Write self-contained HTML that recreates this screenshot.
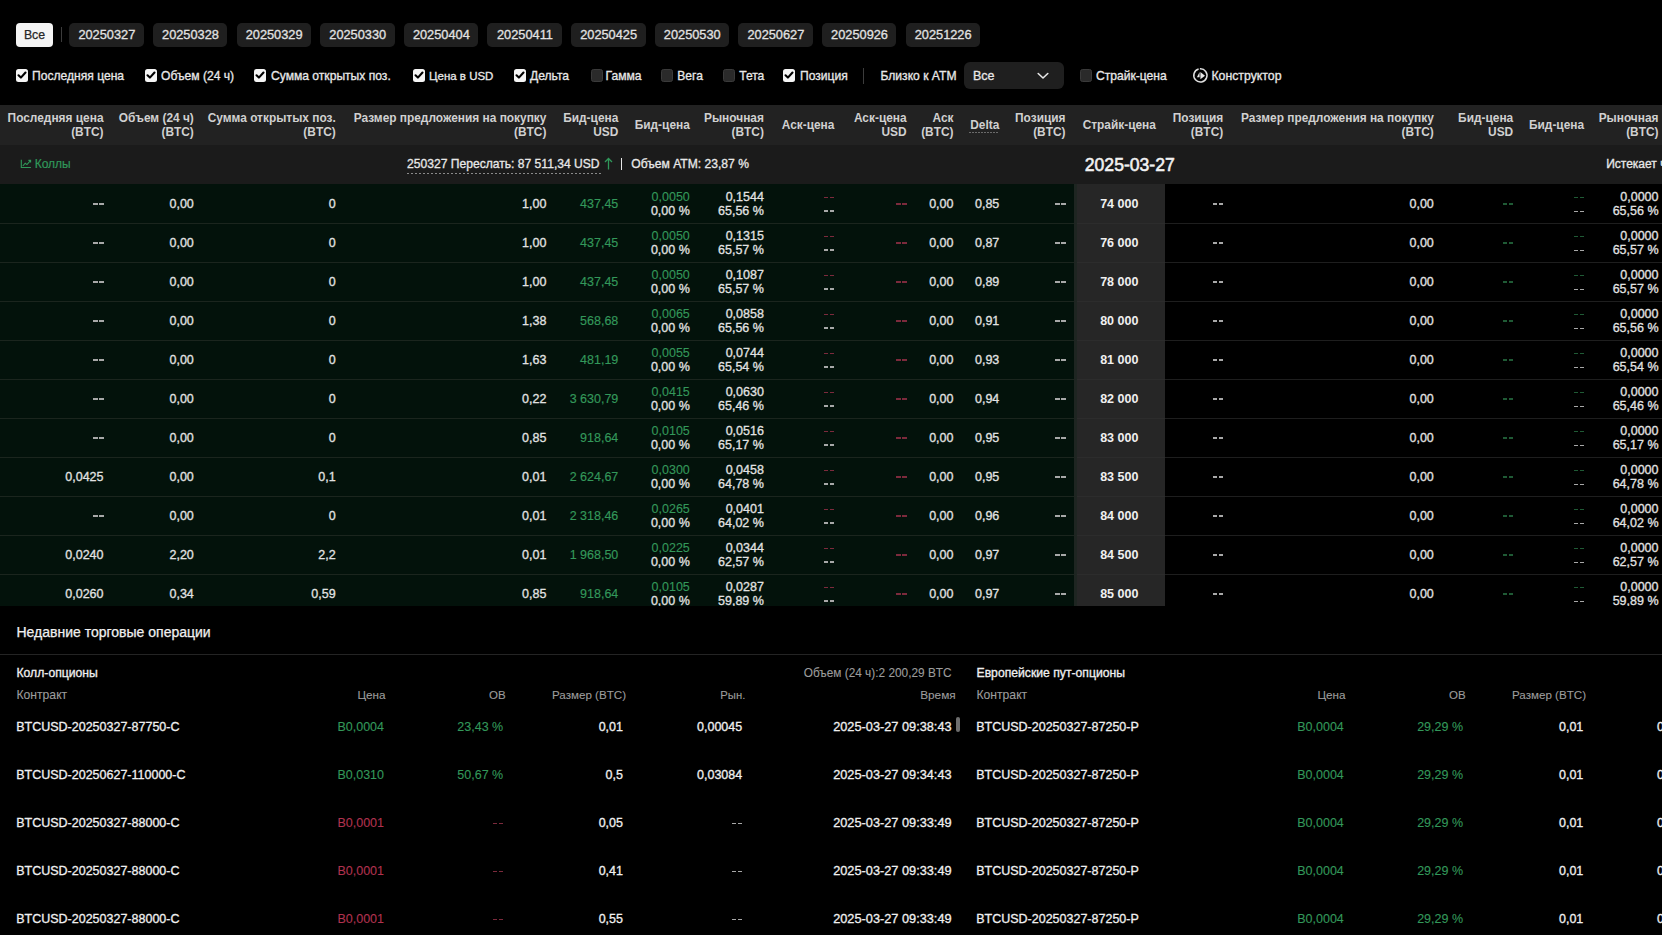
<!DOCTYPE html>
<html><head><meta charset="utf-8"><title>Options</title><style>
html,body{margin:0;padding:0;}
body{width:1662px;height:935px;background:#000;overflow:hidden;position:relative;font-family:"Liberation Sans", sans-serif;}
.t{position:absolute;white-space:nowrap;}
.b{position:absolute;}
</style></head><body>
<div class="b" style="left:16px;top:23px;width:37px;height:23.5px;background:#f4f4f4;border-radius:4px;"></div>
<div class="t" style="top:26.80px;font-size:12.3px;line-height:16px;color:#262626;-webkit-text-stroke:0.25px #262626;left:-315.50px;width:700px;text-align:center;">Все</div>
<div class="b" style="left:61px;top:27px;width:1px;height:15px;background:#3c3c3c;"></div>
<div class="b" style="left:69.3px;top:23px;width:74.5px;height:23.5px;background:#1f1f1f;border-radius:5px;"></div>
<div class="t" style="top:26.80px;font-size:12.8px;line-height:16px;color:#e2e2e2;-webkit-text-stroke:0.3px #e2e2e2;left:-243.15px;width:700px;text-align:center;">20250327</div>
<div class="b" style="left:152.93px;top:23px;width:74.5px;height:23.5px;background:#1f1f1f;border-radius:5px;"></div>
<div class="t" style="top:26.80px;font-size:12.8px;line-height:16px;color:#e2e2e2;-webkit-text-stroke:0.3px #e2e2e2;left:-159.52px;width:700px;text-align:center;">20250328</div>
<div class="b" style="left:236.56px;top:23px;width:74.5px;height:23.5px;background:#1f1f1f;border-radius:5px;"></div>
<div class="t" style="top:26.80px;font-size:12.8px;line-height:16px;color:#e2e2e2;-webkit-text-stroke:0.3px #e2e2e2;left:-75.89px;width:700px;text-align:center;">20250329</div>
<div class="b" style="left:320.19px;top:23px;width:74.5px;height:23.5px;background:#1f1f1f;border-radius:5px;"></div>
<div class="t" style="top:26.80px;font-size:12.8px;line-height:16px;color:#e2e2e2;-webkit-text-stroke:0.3px #e2e2e2;left:7.74px;width:700px;text-align:center;">20250330</div>
<div class="b" style="left:403.82px;top:23px;width:74.5px;height:23.5px;background:#1f1f1f;border-radius:5px;"></div>
<div class="t" style="top:26.80px;font-size:12.8px;line-height:16px;color:#e2e2e2;-webkit-text-stroke:0.3px #e2e2e2;left:91.37px;width:700px;text-align:center;">20250404</div>
<div class="b" style="left:487.45px;top:23px;width:74.5px;height:23.5px;background:#1f1f1f;border-radius:5px;"></div>
<div class="t" style="top:26.80px;font-size:12.8px;line-height:16px;color:#e2e2e2;-webkit-text-stroke:0.3px #e2e2e2;left:175.00px;width:700px;text-align:center;">20250411</div>
<div class="b" style="left:571.08px;top:23px;width:74.5px;height:23.5px;background:#1f1f1f;border-radius:5px;"></div>
<div class="t" style="top:26.80px;font-size:12.8px;line-height:16px;color:#e2e2e2;-webkit-text-stroke:0.3px #e2e2e2;left:258.63px;width:700px;text-align:center;">20250425</div>
<div class="b" style="left:654.71px;top:23px;width:74.5px;height:23.5px;background:#1f1f1f;border-radius:5px;"></div>
<div class="t" style="top:26.80px;font-size:12.8px;line-height:16px;color:#e2e2e2;-webkit-text-stroke:0.3px #e2e2e2;left:342.26px;width:700px;text-align:center;">20250530</div>
<div class="b" style="left:738.34px;top:23px;width:74.5px;height:23.5px;background:#1f1f1f;border-radius:5px;"></div>
<div class="t" style="top:26.80px;font-size:12.8px;line-height:16px;color:#e2e2e2;-webkit-text-stroke:0.3px #e2e2e2;left:425.89px;width:700px;text-align:center;">20250627</div>
<div class="b" style="left:821.97px;top:23px;width:74.5px;height:23.5px;background:#1f1f1f;border-radius:5px;"></div>
<div class="t" style="top:26.80px;font-size:12.8px;line-height:16px;color:#e2e2e2;-webkit-text-stroke:0.3px #e2e2e2;left:509.52px;width:700px;text-align:center;">20250926</div>
<div class="b" style="left:905.6px;top:23px;width:74.5px;height:23.5px;background:#1f1f1f;border-radius:5px;"></div>
<div class="t" style="top:26.80px;font-size:12.8px;line-height:16px;color:#e2e2e2;-webkit-text-stroke:0.3px #e2e2e2;left:593.15px;width:700px;text-align:center;">20251226</div>
<div class="b" style="left:16px;top:69px;width:12px;height:12.5px;background:#f5f5f5;border-radius:2.5px;"><svg width="12" height="12" viewBox="0 0 12 12" style="position:absolute;left:0;top:0"><path d="M2.5 6.3 L4.9 8.6 L9.5 3.5" fill="none" stroke="#000" stroke-width="2.1" stroke-linecap="round" stroke-linejoin="round"/></svg></div>
<div class="t" style="top:67.50px;font-size:12.1px;line-height:16px;color:#e8e8e8;-webkit-text-stroke:0.3px #e8e8e8;left:32.00px;">Последняя цена</div>
<div class="b" style="left:145px;top:69px;width:12px;height:12.5px;background:#f5f5f5;border-radius:2.5px;"><svg width="12" height="12" viewBox="0 0 12 12" style="position:absolute;left:0;top:0"><path d="M2.5 6.3 L4.9 8.6 L9.5 3.5" fill="none" stroke="#000" stroke-width="2.1" stroke-linecap="round" stroke-linejoin="round"/></svg></div>
<div class="t" style="top:67.50px;font-size:12.1px;line-height:16px;color:#e8e8e8;-webkit-text-stroke:0.3px #e8e8e8;left:161.00px;">Объем (24 ч)</div>
<div class="b" style="left:254px;top:69px;width:12px;height:12.5px;background:#f5f5f5;border-radius:2.5px;"><svg width="12" height="12" viewBox="0 0 12 12" style="position:absolute;left:0;top:0"><path d="M2.5 6.3 L4.9 8.6 L9.5 3.5" fill="none" stroke="#000" stroke-width="2.1" stroke-linecap="round" stroke-linejoin="round"/></svg></div>
<div class="t" style="top:67.50px;font-size:12.1px;line-height:16px;color:#e8e8e8;-webkit-text-stroke:0.3px #e8e8e8;left:271.00px;">Сумма открытых поз.</div>
<div class="b" style="left:413px;top:69px;width:12px;height:12.5px;background:#f5f5f5;border-radius:2.5px;"><svg width="12" height="12" viewBox="0 0 12 12" style="position:absolute;left:0;top:0"><path d="M2.5 6.3 L4.9 8.6 L9.5 3.5" fill="none" stroke="#000" stroke-width="2.1" stroke-linecap="round" stroke-linejoin="round"/></svg></div>
<div class="t" style="top:67.50px;font-size:11.5px;line-height:16px;color:#e8e8e8;-webkit-text-stroke:0.3px #e8e8e8;left:429.00px;">Цена в USD</div>
<div class="b" style="left:514px;top:69px;width:12px;height:12.5px;background:#f5f5f5;border-radius:2.5px;"><svg width="12" height="12" viewBox="0 0 12 12" style="position:absolute;left:0;top:0"><path d="M2.5 6.3 L4.9 8.6 L9.5 3.5" fill="none" stroke="#000" stroke-width="2.1" stroke-linecap="round" stroke-linejoin="round"/></svg></div>
<div class="t" style="top:67.50px;font-size:12.1px;line-height:16px;color:#e8e8e8;-webkit-text-stroke:0.3px #e8e8e8;left:530.00px;">Дельта</div>
<div class="b" style="left:590.5px;top:69px;width:12px;height:12.5px;background:#2a2a2a;border-radius:2.5px;box-sizing:border-box;border:1px solid #3a3a3a;"></div>
<div class="t" style="top:67.50px;font-size:12.1px;line-height:16px;color:#e8e8e8;-webkit-text-stroke:0.3px #e8e8e8;left:605.60px;">Гамма</div>
<div class="b" style="left:661.3px;top:69px;width:12px;height:12.5px;background:#2a2a2a;border-radius:2.5px;box-sizing:border-box;border:1px solid #3a3a3a;"></div>
<div class="t" style="top:67.50px;font-size:12.1px;line-height:16px;color:#e8e8e8;-webkit-text-stroke:0.3px #e8e8e8;left:677.30px;">Вега</div>
<div class="b" style="left:723.3px;top:69px;width:12px;height:12.5px;background:#2a2a2a;border-radius:2.5px;box-sizing:border-box;border:1px solid #3a3a3a;"></div>
<div class="t" style="top:67.50px;font-size:12.1px;line-height:16px;color:#e8e8e8;-webkit-text-stroke:0.3px #e8e8e8;left:739.20px;">Тета</div>
<div class="b" style="left:783px;top:69px;width:12px;height:12.5px;background:#f5f5f5;border-radius:2.5px;"><svg width="12" height="12" viewBox="0 0 12 12" style="position:absolute;left:0;top:0"><path d="M2.5 6.3 L4.9 8.6 L9.5 3.5" fill="none" stroke="#000" stroke-width="2.1" stroke-linecap="round" stroke-linejoin="round"/></svg></div>
<div class="t" style="top:67.50px;font-size:12.1px;line-height:16px;color:#e8e8e8;-webkit-text-stroke:0.3px #e8e8e8;left:800.00px;">Позиция</div>
<div class="b" style="left:863px;top:68px;width:1px;height:16px;background:#3c3c3c;"></div>
<div class="t" style="top:67.50px;font-size:12.1px;line-height:16px;color:#e8e8e8;-webkit-text-stroke:0.3px #e8e8e8;left:880.50px;">Близко к ATM</div>
<div class="b" style="left:964px;top:62px;width:100px;height:27px;background:#1f1f1f;border-radius:6px;"></div>
<div class="t" style="top:67.80px;font-size:12.5px;line-height:16px;color:#e8e8e8;-webkit-text-stroke:0.3px #e8e8e8;left:973.00px;">Все</div>
<svg class="b" style="left:1037px;top:72px" width="12" height="8" viewBox="0 0 12 8"><path d="M1.2 1.5 L6 6 L10.8 1.5" fill="none" stroke="#e8e8e8" stroke-width="1.6" stroke-linecap="round" stroke-linejoin="round"/></svg>
<div class="b" style="left:1080px;top:69px;width:12px;height:12.5px;background:#2a2a2a;border-radius:2.5px;box-sizing:border-box;border:1px solid #3a3a3a;"></div>
<div class="t" style="top:67.50px;font-size:12.1px;line-height:16px;color:#e8e8e8;-webkit-text-stroke:0.3px #e8e8e8;left:1096.00px;">Страйк-цена</div>
<svg class="b" style="left:1192px;top:67px" width="17" height="17" viewBox="0 0 17 17"><path d="M6.6 2.05 A6.6 6.6 0 1 0 7.9 1.82" fill="none" stroke="#e0e0e0" stroke-width="1.5"/><path d="M8.4 5 L13 8.8 L8.4 12.3 Z M7.6 4.9 L4.9 10.3 L7.6 10.3 Z" fill="#e8e8e8"/></svg>
<div class="t" style="top:67.50px;font-size:12.3px;line-height:16px;color:#e8e8e8;-webkit-text-stroke:0.3px #e8e8e8;left:1211.40px;">Конструктор</div>
<div class="b" style="left:0px;top:105px;width:1662px;height:40px;background:#222222;"></div>
<div class="b" style="left:0px;top:145px;width:1662px;height:39px;background:#1b1b1b;"></div>
<div class="t" style="top:109.50px;font-size:11.9px;line-height:16px;color:#d0d0d0;font-weight:700;left:-596.50px;width:700px;text-align:right;">Последняя цена</div>
<div class="t" style="top:123.50px;font-size:11.9px;line-height:16px;color:#d0d0d0;font-weight:700;left:-596.50px;width:700px;text-align:right;">(BTC)</div>
<div class="t" style="top:109.50px;font-size:11.9px;line-height:16px;color:#d0d0d0;font-weight:700;left:-506.20px;width:700px;text-align:right;">Объем (24 ч)</div>
<div class="t" style="top:123.50px;font-size:11.9px;line-height:16px;color:#d0d0d0;font-weight:700;left:-506.20px;width:700px;text-align:right;">(BTC)</div>
<div class="t" style="top:109.50px;font-size:11.9px;line-height:16px;color:#d0d0d0;font-weight:700;left:-364.30px;width:700px;text-align:right;">Сумма открытых поз.</div>
<div class="t" style="top:123.50px;font-size:11.9px;line-height:16px;color:#d0d0d0;font-weight:700;left:-364.30px;width:700px;text-align:right;">(BTC)</div>
<div class="t" style="top:109.50px;font-size:11.9px;line-height:16px;color:#d0d0d0;font-weight:700;left:-153.60px;width:700px;text-align:right;">Размер предложения на покупку</div>
<div class="t" style="top:123.50px;font-size:11.9px;line-height:16px;color:#d0d0d0;font-weight:700;left:-153.60px;width:700px;text-align:right;">(BTC)</div>
<div class="t" style="top:109.50px;font-size:11.9px;line-height:16px;color:#d0d0d0;font-weight:700;left:-81.70px;width:700px;text-align:right;">Бид-цена</div>
<div class="t" style="top:123.50px;font-size:11.9px;line-height:16px;color:#d0d0d0;font-weight:700;left:-81.70px;width:700px;text-align:right;">USD</div>
<div class="t" style="top:116.50px;font-size:11.9px;line-height:16px;color:#d0d0d0;font-weight:700;left:-10.20px;width:700px;text-align:right;">Бид-цена</div>
<div class="t" style="top:109.50px;font-size:11.9px;line-height:16px;color:#d0d0d0;font-weight:700;left:63.90px;width:700px;text-align:right;">Рыночная</div>
<div class="t" style="top:123.50px;font-size:11.9px;line-height:16px;color:#d0d0d0;font-weight:700;left:63.90px;width:700px;text-align:right;">(BTC)</div>
<div class="t" style="top:116.50px;font-size:11.9px;line-height:16px;color:#d0d0d0;font-weight:700;left:134.40px;width:700px;text-align:right;">Аск-цена</div>
<div class="t" style="top:109.50px;font-size:11.9px;line-height:16px;color:#d0d0d0;font-weight:700;left:206.60px;width:700px;text-align:right;">Аск-цена</div>
<div class="t" style="top:123.50px;font-size:11.9px;line-height:16px;color:#d0d0d0;font-weight:700;left:206.60px;width:700px;text-align:right;">USD</div>
<div class="t" style="top:109.50px;font-size:11.9px;line-height:16px;color:#d0d0d0;font-weight:700;left:253.50px;width:700px;text-align:right;">Аск</div>
<div class="t" style="top:123.50px;font-size:11.9px;line-height:16px;color:#d0d0d0;font-weight:700;left:253.50px;width:700px;text-align:right;">(BTC)</div>
<div class="t" style="top:116.50px;font-size:11.9px;line-height:16px;color:#d0d0d0;font-weight:700;left:299.30px;width:700px;text-align:right;">Delta</div>
<div class="b" style="left:969px;top:131.5px;width:30px;height:1px;background:repeating-linear-gradient(90deg,#6a6a6a 0 2px,transparent 2px 3px);"></div>
<div class="t" style="top:109.50px;font-size:11.9px;line-height:16px;color:#d0d0d0;font-weight:700;left:365.50px;width:700px;text-align:right;">Позиция</div>
<div class="t" style="top:123.50px;font-size:11.9px;line-height:16px;color:#d0d0d0;font-weight:700;left:365.50px;width:700px;text-align:right;">(BTC)</div>
<div class="t" style="top:116.50px;font-size:11.9px;line-height:16px;color:#d0d0d0;font-weight:700;left:769.30px;width:700px;text-align:center;">Страйк-цена</div>
<div class="t" style="top:109.50px;font-size:11.9px;line-height:16px;color:#d0d0d0;font-weight:700;left:523.20px;width:700px;text-align:right;">Позиция</div>
<div class="t" style="top:123.50px;font-size:11.9px;line-height:16px;color:#d0d0d0;font-weight:700;left:523.20px;width:700px;text-align:right;">(BTC)</div>
<div class="t" style="top:109.50px;font-size:11.9px;line-height:16px;color:#d0d0d0;font-weight:700;left:733.80px;width:700px;text-align:right;">Размер предложения на покупку</div>
<div class="t" style="top:123.50px;font-size:11.9px;line-height:16px;color:#d0d0d0;font-weight:700;left:733.80px;width:700px;text-align:right;">(BTC)</div>
<div class="t" style="top:109.50px;font-size:11.9px;line-height:16px;color:#d0d0d0;font-weight:700;left:813.20px;width:700px;text-align:right;">Бид-цена</div>
<div class="t" style="top:123.50px;font-size:11.9px;line-height:16px;color:#d0d0d0;font-weight:700;left:813.20px;width:700px;text-align:right;">USD</div>
<div class="t" style="top:116.50px;font-size:11.9px;line-height:16px;color:#d0d0d0;font-weight:700;left:884.10px;width:700px;text-align:right;">Бид-цена</div>
<div class="t" style="top:109.50px;font-size:11.9px;line-height:16px;color:#d0d0d0;font-weight:700;left:958.50px;width:700px;text-align:right;">Рыночная</div>
<div class="t" style="top:123.50px;font-size:11.9px;line-height:16px;color:#d0d0d0;font-weight:700;left:958.50px;width:700px;text-align:right;">(BTC)</div>
<svg class="b" style="left:20px;top:159px" width="12" height="10" viewBox="0 0 12 10"><path d="M1.3 0.8 V8.5 H10.9" fill="none" stroke="#30985a" stroke-width="1.1"/><path d="M2.8 7 L5.2 4.2 L7 5.6 L10.4 1.6 M8.4 1.4 H10.6 V3.6" fill="none" stroke="#30985a" stroke-width="1.1"/></svg>
<div class="t" style="top:156.00px;font-size:12px;line-height:16px;color:#30985a;-webkit-text-stroke:0.2px #30985a;left:34.70px;">Коллы</div>
<div class="t" style="top:155.50px;font-size:12.1px;line-height:16px;color:#e8e8e8;-webkit-text-stroke:0.3px #e8e8e8;left:407.10px;">250327 Переслать: 87 511,34 USD</div>
<div class="b" style="left:407px;top:172.5px;width:194px;height:1px;background:repeating-linear-gradient(90deg,#8a8a8a 0 2px,transparent 2px 4px);"></div>
<svg class="b" style="left:604px;top:157px" width="9" height="13" viewBox="0 0 9 13"><path d="M4.5 12.5 V1.5 M1 5 L4.5 1.5 L8 5" fill="none" stroke="#30985a" stroke-width="1.3"/></svg>
<div class="b" style="left:621px;top:158px;width:1.3px;height:12px;background:#e8e8e8;"></div>
<div class="t" style="top:155.50px;font-size:12.1px;line-height:16px;color:#e8e8e8;-webkit-text-stroke:0.3px #e8e8e8;left:631.30px;">Объем ATM: 23,87 %</div>
<div class="t" style="top:156.60px;font-size:17.6px;line-height:16px;color:#f2f2f2;-webkit-text-stroke:0.55px #f2f2f2;left:1084.80px;">2025-03-27</div>
<div class="t" style="top:155.50px;font-size:12px;line-height:16px;color:#e8e8e8;-webkit-text-stroke:0.3px #e8e8e8;left:1606.20px;">Истекает через 7 ч</div>
<div class="b" style="left:0;top:184px;width:1662px;height:422px;overflow:hidden">
<div class="b" style="left:0;top:0px;width:1074px;height:39px;background:#03120b;"></div>
<div class="b" style="left:1074px;top:0px;width:91px;height:39px;background:#262626;"></div>
<div class="b" style="left:1074px;top:0px;width:3px;height:39px;background:#1e2521"></div>
<div class="b" style="left:1165px;top:0px;width:497px;height:39px;background:#000;"></div>
<div class="b" style="left:93.0px;top:19.45px;width:10.5px;height:1.1px;background:linear-gradient(90deg,#a8a8a8 0 43%,transparent 43% 57%,#a8a8a8 57% 100%);"></div>
<div class="t" style="top:11.50px;font-size:12.5px;line-height:16px;color:#e2e2e2;-webkit-text-stroke:0.3px #e2e2e2;left:-506.20px;width:700px;text-align:right;">0,00</div>
<div class="t" style="top:11.50px;font-size:12.5px;line-height:16px;color:#e2e2e2;-webkit-text-stroke:0.3px #e2e2e2;left:-364.30px;width:700px;text-align:right;">0</div>
<div class="t" style="top:11.50px;font-size:12.5px;line-height:16px;color:#e2e2e2;-webkit-text-stroke:0.3px #e2e2e2;left:-153.60px;width:700px;text-align:right;">1,00</div>
<div class="t" style="top:11.50px;font-size:12.5px;line-height:16px;color:#33985a;-webkit-text-stroke:0.15px #33985a;left:-81.70px;width:700px;text-align:right;">437,45</div>
<div class="t" style="top:5.20px;font-size:12.5px;line-height:16px;color:#33985a;-webkit-text-stroke:0.1px #33985a;left:-10.20px;width:700px;text-align:right;">0,0050</div>
<div class="t" style="top:18.50px;font-size:12.5px;line-height:16px;color:#e2e2e2;-webkit-text-stroke:0.3px #e2e2e2;left:-10.20px;width:700px;text-align:right;">0,00 %</div>
<div class="t" style="top:5.20px;font-size:12.5px;line-height:16px;color:#e2e2e2;-webkit-text-stroke:0.3px #e2e2e2;left:63.90px;width:700px;text-align:right;">0,1544</div>
<div class="t" style="top:18.50px;font-size:12.5px;line-height:16px;color:#e2e2e2;-webkit-text-stroke:0.3px #e2e2e2;left:63.90px;width:700px;text-align:right;">65,56 %</div>
<div class="b" style="left:823.9px;top:13.15px;width:10.5px;height:1.1px;background:linear-gradient(90deg,#7c2a3c 0 43%,transparent 43% 57%,#7c2a3c 57% 100%);"></div>
<div class="b" style="left:823.9px;top:26.45px;width:10.5px;height:1.1px;background:linear-gradient(90deg,#a8a8a8 0 43%,transparent 43% 57%,#a8a8a8 57% 100%);"></div>
<div class="b" style="left:896.1px;top:19.45px;width:10.5px;height:1.1px;background:linear-gradient(90deg,#7c2a3c 0 43%,transparent 43% 57%,#7c2a3c 57% 100%);"></div>
<div class="t" style="top:11.50px;font-size:12.5px;line-height:16px;color:#e2e2e2;-webkit-text-stroke:0.3px #e2e2e2;left:253.50px;width:700px;text-align:right;">0,00</div>
<div class="t" style="top:11.50px;font-size:12.5px;line-height:16px;color:#e2e2e2;-webkit-text-stroke:0.3px #e2e2e2;left:299.30px;width:700px;text-align:right;">0,85</div>
<div class="b" style="left:1055.0px;top:19.45px;width:10.5px;height:1.1px;background:linear-gradient(90deg,#a8a8a8 0 43%,transparent 43% 57%,#a8a8a8 57% 100%);"></div>
<div class="t" style="top:11.50px;font-size:12.5px;line-height:16px;color:#f0f0f0;font-weight:700;left:769.30px;width:700px;text-align:center;">74 000</div>
<div class="b" style="left:1212.7px;top:19.45px;width:10.5px;height:1.1px;background:linear-gradient(90deg,#a8a8a8 0 43%,transparent 43% 57%,#a8a8a8 57% 100%);"></div>
<div class="t" style="top:11.50px;font-size:12.5px;line-height:16px;color:#e2e2e2;-webkit-text-stroke:0.3px #e2e2e2;left:733.80px;width:700px;text-align:right;">0,00</div>
<div class="b" style="left:1502.7px;top:19.45px;width:10.5px;height:1.1px;background:linear-gradient(90deg,#1f5a35 0 43%,transparent 43% 57%,#1f5a35 57% 100%);"></div>
<div class="b" style="left:1573.6px;top:12.65px;width:10.5px;height:1.1px;background:linear-gradient(90deg,#1f5a35 0 43%,transparent 43% 57%,#1f5a35 57% 100%);"></div>
<div class="b" style="left:1573.6px;top:26.75px;width:10.5px;height:1.1px;background:linear-gradient(90deg,#a8a8a8 0 43%,transparent 43% 57%,#a8a8a8 57% 100%);"></div>
<div class="t" style="top:4.90px;font-size:12.5px;line-height:16px;color:#e2e2e2;-webkit-text-stroke:0.3px #e2e2e2;left:958.50px;width:700px;text-align:right;">0,0000</div>
<div class="t" style="top:19.10px;font-size:12.5px;line-height:16px;color:#e2e2e2;-webkit-text-stroke:0.3px #e2e2e2;left:958.50px;width:700px;text-align:right;">65,56 %</div>
<div class="b" style="left:0;top:39px;width:1074px;height:39px;background:#03120b;border-top:1px solid #1b251e;box-sizing:border-box;"></div>
<div class="b" style="left:1074px;top:39px;width:91px;height:39px;background:#262626;border-top:1px solid #2c2c2c;box-sizing:border-box;"></div>
<div class="b" style="left:1074px;top:39px;width:3px;height:39px;background:#1e2521"></div>
<div class="b" style="left:1165px;top:39px;width:497px;height:39px;background:#000;border-top:1px solid #1e1e1e;box-sizing:border-box;"></div>
<div class="b" style="left:93.0px;top:58.45px;width:10.5px;height:1.1px;background:linear-gradient(90deg,#a8a8a8 0 43%,transparent 43% 57%,#a8a8a8 57% 100%);"></div>
<div class="t" style="top:50.50px;font-size:12.5px;line-height:16px;color:#e2e2e2;-webkit-text-stroke:0.3px #e2e2e2;left:-506.20px;width:700px;text-align:right;">0,00</div>
<div class="t" style="top:50.50px;font-size:12.5px;line-height:16px;color:#e2e2e2;-webkit-text-stroke:0.3px #e2e2e2;left:-364.30px;width:700px;text-align:right;">0</div>
<div class="t" style="top:50.50px;font-size:12.5px;line-height:16px;color:#e2e2e2;-webkit-text-stroke:0.3px #e2e2e2;left:-153.60px;width:700px;text-align:right;">1,00</div>
<div class="t" style="top:50.50px;font-size:12.5px;line-height:16px;color:#33985a;-webkit-text-stroke:0.15px #33985a;left:-81.70px;width:700px;text-align:right;">437,45</div>
<div class="t" style="top:44.20px;font-size:12.5px;line-height:16px;color:#33985a;-webkit-text-stroke:0.1px #33985a;left:-10.20px;width:700px;text-align:right;">0,0050</div>
<div class="t" style="top:57.50px;font-size:12.5px;line-height:16px;color:#e2e2e2;-webkit-text-stroke:0.3px #e2e2e2;left:-10.20px;width:700px;text-align:right;">0,00 %</div>
<div class="t" style="top:44.20px;font-size:12.5px;line-height:16px;color:#e2e2e2;-webkit-text-stroke:0.3px #e2e2e2;left:63.90px;width:700px;text-align:right;">0,1315</div>
<div class="t" style="top:57.50px;font-size:12.5px;line-height:16px;color:#e2e2e2;-webkit-text-stroke:0.3px #e2e2e2;left:63.90px;width:700px;text-align:right;">65,57 %</div>
<div class="b" style="left:823.9px;top:52.15px;width:10.5px;height:1.1px;background:linear-gradient(90deg,#7c2a3c 0 43%,transparent 43% 57%,#7c2a3c 57% 100%);"></div>
<div class="b" style="left:823.9px;top:65.45px;width:10.5px;height:1.1px;background:linear-gradient(90deg,#a8a8a8 0 43%,transparent 43% 57%,#a8a8a8 57% 100%);"></div>
<div class="b" style="left:896.1px;top:58.45px;width:10.5px;height:1.1px;background:linear-gradient(90deg,#7c2a3c 0 43%,transparent 43% 57%,#7c2a3c 57% 100%);"></div>
<div class="t" style="top:50.50px;font-size:12.5px;line-height:16px;color:#e2e2e2;-webkit-text-stroke:0.3px #e2e2e2;left:253.50px;width:700px;text-align:right;">0,00</div>
<div class="t" style="top:50.50px;font-size:12.5px;line-height:16px;color:#e2e2e2;-webkit-text-stroke:0.3px #e2e2e2;left:299.30px;width:700px;text-align:right;">0,87</div>
<div class="b" style="left:1055.0px;top:58.45px;width:10.5px;height:1.1px;background:linear-gradient(90deg,#a8a8a8 0 43%,transparent 43% 57%,#a8a8a8 57% 100%);"></div>
<div class="t" style="top:50.50px;font-size:12.5px;line-height:16px;color:#f0f0f0;font-weight:700;left:769.30px;width:700px;text-align:center;">76 000</div>
<div class="b" style="left:1212.7px;top:58.45px;width:10.5px;height:1.1px;background:linear-gradient(90deg,#a8a8a8 0 43%,transparent 43% 57%,#a8a8a8 57% 100%);"></div>
<div class="t" style="top:50.50px;font-size:12.5px;line-height:16px;color:#e2e2e2;-webkit-text-stroke:0.3px #e2e2e2;left:733.80px;width:700px;text-align:right;">0,00</div>
<div class="b" style="left:1502.7px;top:58.45px;width:10.5px;height:1.1px;background:linear-gradient(90deg,#1f5a35 0 43%,transparent 43% 57%,#1f5a35 57% 100%);"></div>
<div class="b" style="left:1573.6px;top:51.65px;width:10.5px;height:1.1px;background:linear-gradient(90deg,#1f5a35 0 43%,transparent 43% 57%,#1f5a35 57% 100%);"></div>
<div class="b" style="left:1573.6px;top:65.75px;width:10.5px;height:1.1px;background:linear-gradient(90deg,#a8a8a8 0 43%,transparent 43% 57%,#a8a8a8 57% 100%);"></div>
<div class="t" style="top:43.90px;font-size:12.5px;line-height:16px;color:#e2e2e2;-webkit-text-stroke:0.3px #e2e2e2;left:958.50px;width:700px;text-align:right;">0,0000</div>
<div class="t" style="top:58.10px;font-size:12.5px;line-height:16px;color:#e2e2e2;-webkit-text-stroke:0.3px #e2e2e2;left:958.50px;width:700px;text-align:right;">65,57 %</div>
<div class="b" style="left:0;top:78px;width:1074px;height:39px;background:#03120b;border-top:1px solid #1b251e;box-sizing:border-box;"></div>
<div class="b" style="left:1074px;top:78px;width:91px;height:39px;background:#262626;border-top:1px solid #2c2c2c;box-sizing:border-box;"></div>
<div class="b" style="left:1074px;top:78px;width:3px;height:39px;background:#1e2521"></div>
<div class="b" style="left:1165px;top:78px;width:497px;height:39px;background:#000;border-top:1px solid #1e1e1e;box-sizing:border-box;"></div>
<div class="b" style="left:93.0px;top:97.45px;width:10.5px;height:1.1px;background:linear-gradient(90deg,#a8a8a8 0 43%,transparent 43% 57%,#a8a8a8 57% 100%);"></div>
<div class="t" style="top:89.50px;font-size:12.5px;line-height:16px;color:#e2e2e2;-webkit-text-stroke:0.3px #e2e2e2;left:-506.20px;width:700px;text-align:right;">0,00</div>
<div class="t" style="top:89.50px;font-size:12.5px;line-height:16px;color:#e2e2e2;-webkit-text-stroke:0.3px #e2e2e2;left:-364.30px;width:700px;text-align:right;">0</div>
<div class="t" style="top:89.50px;font-size:12.5px;line-height:16px;color:#e2e2e2;-webkit-text-stroke:0.3px #e2e2e2;left:-153.60px;width:700px;text-align:right;">1,00</div>
<div class="t" style="top:89.50px;font-size:12.5px;line-height:16px;color:#33985a;-webkit-text-stroke:0.15px #33985a;left:-81.70px;width:700px;text-align:right;">437,45</div>
<div class="t" style="top:83.20px;font-size:12.5px;line-height:16px;color:#33985a;-webkit-text-stroke:0.1px #33985a;left:-10.20px;width:700px;text-align:right;">0,0050</div>
<div class="t" style="top:96.50px;font-size:12.5px;line-height:16px;color:#e2e2e2;-webkit-text-stroke:0.3px #e2e2e2;left:-10.20px;width:700px;text-align:right;">0,00 %</div>
<div class="t" style="top:83.20px;font-size:12.5px;line-height:16px;color:#e2e2e2;-webkit-text-stroke:0.3px #e2e2e2;left:63.90px;width:700px;text-align:right;">0,1087</div>
<div class="t" style="top:96.50px;font-size:12.5px;line-height:16px;color:#e2e2e2;-webkit-text-stroke:0.3px #e2e2e2;left:63.90px;width:700px;text-align:right;">65,57 %</div>
<div class="b" style="left:823.9px;top:91.15px;width:10.5px;height:1.1px;background:linear-gradient(90deg,#7c2a3c 0 43%,transparent 43% 57%,#7c2a3c 57% 100%);"></div>
<div class="b" style="left:823.9px;top:104.45px;width:10.5px;height:1.1px;background:linear-gradient(90deg,#a8a8a8 0 43%,transparent 43% 57%,#a8a8a8 57% 100%);"></div>
<div class="b" style="left:896.1px;top:97.45px;width:10.5px;height:1.1px;background:linear-gradient(90deg,#7c2a3c 0 43%,transparent 43% 57%,#7c2a3c 57% 100%);"></div>
<div class="t" style="top:89.50px;font-size:12.5px;line-height:16px;color:#e2e2e2;-webkit-text-stroke:0.3px #e2e2e2;left:253.50px;width:700px;text-align:right;">0,00</div>
<div class="t" style="top:89.50px;font-size:12.5px;line-height:16px;color:#e2e2e2;-webkit-text-stroke:0.3px #e2e2e2;left:299.30px;width:700px;text-align:right;">0,89</div>
<div class="b" style="left:1055.0px;top:97.45px;width:10.5px;height:1.1px;background:linear-gradient(90deg,#a8a8a8 0 43%,transparent 43% 57%,#a8a8a8 57% 100%);"></div>
<div class="t" style="top:89.50px;font-size:12.5px;line-height:16px;color:#f0f0f0;font-weight:700;left:769.30px;width:700px;text-align:center;">78 000</div>
<div class="b" style="left:1212.7px;top:97.45px;width:10.5px;height:1.1px;background:linear-gradient(90deg,#a8a8a8 0 43%,transparent 43% 57%,#a8a8a8 57% 100%);"></div>
<div class="t" style="top:89.50px;font-size:12.5px;line-height:16px;color:#e2e2e2;-webkit-text-stroke:0.3px #e2e2e2;left:733.80px;width:700px;text-align:right;">0,00</div>
<div class="b" style="left:1502.7px;top:97.45px;width:10.5px;height:1.1px;background:linear-gradient(90deg,#1f5a35 0 43%,transparent 43% 57%,#1f5a35 57% 100%);"></div>
<div class="b" style="left:1573.6px;top:90.65px;width:10.5px;height:1.1px;background:linear-gradient(90deg,#1f5a35 0 43%,transparent 43% 57%,#1f5a35 57% 100%);"></div>
<div class="b" style="left:1573.6px;top:104.75px;width:10.5px;height:1.1px;background:linear-gradient(90deg,#a8a8a8 0 43%,transparent 43% 57%,#a8a8a8 57% 100%);"></div>
<div class="t" style="top:82.90px;font-size:12.5px;line-height:16px;color:#e2e2e2;-webkit-text-stroke:0.3px #e2e2e2;left:958.50px;width:700px;text-align:right;">0,0000</div>
<div class="t" style="top:97.10px;font-size:12.5px;line-height:16px;color:#e2e2e2;-webkit-text-stroke:0.3px #e2e2e2;left:958.50px;width:700px;text-align:right;">65,57 %</div>
<div class="b" style="left:0;top:117px;width:1074px;height:39px;background:#03120b;border-top:1px solid #1b251e;box-sizing:border-box;"></div>
<div class="b" style="left:1074px;top:117px;width:91px;height:39px;background:#262626;border-top:1px solid #2c2c2c;box-sizing:border-box;"></div>
<div class="b" style="left:1074px;top:117px;width:3px;height:39px;background:#1e2521"></div>
<div class="b" style="left:1165px;top:117px;width:497px;height:39px;background:#000;border-top:1px solid #1e1e1e;box-sizing:border-box;"></div>
<div class="b" style="left:93.0px;top:136.45px;width:10.5px;height:1.1px;background:linear-gradient(90deg,#a8a8a8 0 43%,transparent 43% 57%,#a8a8a8 57% 100%);"></div>
<div class="t" style="top:128.50px;font-size:12.5px;line-height:16px;color:#e2e2e2;-webkit-text-stroke:0.3px #e2e2e2;left:-506.20px;width:700px;text-align:right;">0,00</div>
<div class="t" style="top:128.50px;font-size:12.5px;line-height:16px;color:#e2e2e2;-webkit-text-stroke:0.3px #e2e2e2;left:-364.30px;width:700px;text-align:right;">0</div>
<div class="t" style="top:128.50px;font-size:12.5px;line-height:16px;color:#e2e2e2;-webkit-text-stroke:0.3px #e2e2e2;left:-153.60px;width:700px;text-align:right;">1,38</div>
<div class="t" style="top:128.50px;font-size:12.5px;line-height:16px;color:#33985a;-webkit-text-stroke:0.15px #33985a;left:-81.70px;width:700px;text-align:right;">568,68</div>
<div class="t" style="top:122.20px;font-size:12.5px;line-height:16px;color:#33985a;-webkit-text-stroke:0.1px #33985a;left:-10.20px;width:700px;text-align:right;">0,0065</div>
<div class="t" style="top:135.50px;font-size:12.5px;line-height:16px;color:#e2e2e2;-webkit-text-stroke:0.3px #e2e2e2;left:-10.20px;width:700px;text-align:right;">0,00 %</div>
<div class="t" style="top:122.20px;font-size:12.5px;line-height:16px;color:#e2e2e2;-webkit-text-stroke:0.3px #e2e2e2;left:63.90px;width:700px;text-align:right;">0,0858</div>
<div class="t" style="top:135.50px;font-size:12.5px;line-height:16px;color:#e2e2e2;-webkit-text-stroke:0.3px #e2e2e2;left:63.90px;width:700px;text-align:right;">65,56 %</div>
<div class="b" style="left:823.9px;top:130.15px;width:10.5px;height:1.1px;background:linear-gradient(90deg,#7c2a3c 0 43%,transparent 43% 57%,#7c2a3c 57% 100%);"></div>
<div class="b" style="left:823.9px;top:143.45px;width:10.5px;height:1.1px;background:linear-gradient(90deg,#a8a8a8 0 43%,transparent 43% 57%,#a8a8a8 57% 100%);"></div>
<div class="b" style="left:896.1px;top:136.45px;width:10.5px;height:1.1px;background:linear-gradient(90deg,#7c2a3c 0 43%,transparent 43% 57%,#7c2a3c 57% 100%);"></div>
<div class="t" style="top:128.50px;font-size:12.5px;line-height:16px;color:#e2e2e2;-webkit-text-stroke:0.3px #e2e2e2;left:253.50px;width:700px;text-align:right;">0,00</div>
<div class="t" style="top:128.50px;font-size:12.5px;line-height:16px;color:#e2e2e2;-webkit-text-stroke:0.3px #e2e2e2;left:299.30px;width:700px;text-align:right;">0,91</div>
<div class="b" style="left:1055.0px;top:136.45px;width:10.5px;height:1.1px;background:linear-gradient(90deg,#a8a8a8 0 43%,transparent 43% 57%,#a8a8a8 57% 100%);"></div>
<div class="t" style="top:128.50px;font-size:12.5px;line-height:16px;color:#f0f0f0;font-weight:700;left:769.30px;width:700px;text-align:center;">80 000</div>
<div class="b" style="left:1212.7px;top:136.45px;width:10.5px;height:1.1px;background:linear-gradient(90deg,#a8a8a8 0 43%,transparent 43% 57%,#a8a8a8 57% 100%);"></div>
<div class="t" style="top:128.50px;font-size:12.5px;line-height:16px;color:#e2e2e2;-webkit-text-stroke:0.3px #e2e2e2;left:733.80px;width:700px;text-align:right;">0,00</div>
<div class="b" style="left:1502.7px;top:136.45px;width:10.5px;height:1.1px;background:linear-gradient(90deg,#1f5a35 0 43%,transparent 43% 57%,#1f5a35 57% 100%);"></div>
<div class="b" style="left:1573.6px;top:129.65px;width:10.5px;height:1.1px;background:linear-gradient(90deg,#1f5a35 0 43%,transparent 43% 57%,#1f5a35 57% 100%);"></div>
<div class="b" style="left:1573.6px;top:143.75px;width:10.5px;height:1.1px;background:linear-gradient(90deg,#a8a8a8 0 43%,transparent 43% 57%,#a8a8a8 57% 100%);"></div>
<div class="t" style="top:121.90px;font-size:12.5px;line-height:16px;color:#e2e2e2;-webkit-text-stroke:0.3px #e2e2e2;left:958.50px;width:700px;text-align:right;">0,0000</div>
<div class="t" style="top:136.10px;font-size:12.5px;line-height:16px;color:#e2e2e2;-webkit-text-stroke:0.3px #e2e2e2;left:958.50px;width:700px;text-align:right;">65,56 %</div>
<div class="b" style="left:0;top:156px;width:1074px;height:39px;background:#03120b;border-top:1px solid #1b251e;box-sizing:border-box;"></div>
<div class="b" style="left:1074px;top:156px;width:91px;height:39px;background:#262626;border-top:1px solid #2c2c2c;box-sizing:border-box;"></div>
<div class="b" style="left:1074px;top:156px;width:3px;height:39px;background:#1e2521"></div>
<div class="b" style="left:1165px;top:156px;width:497px;height:39px;background:#000;border-top:1px solid #1e1e1e;box-sizing:border-box;"></div>
<div class="b" style="left:93.0px;top:175.45px;width:10.5px;height:1.1px;background:linear-gradient(90deg,#a8a8a8 0 43%,transparent 43% 57%,#a8a8a8 57% 100%);"></div>
<div class="t" style="top:167.50px;font-size:12.5px;line-height:16px;color:#e2e2e2;-webkit-text-stroke:0.3px #e2e2e2;left:-506.20px;width:700px;text-align:right;">0,00</div>
<div class="t" style="top:167.50px;font-size:12.5px;line-height:16px;color:#e2e2e2;-webkit-text-stroke:0.3px #e2e2e2;left:-364.30px;width:700px;text-align:right;">0</div>
<div class="t" style="top:167.50px;font-size:12.5px;line-height:16px;color:#e2e2e2;-webkit-text-stroke:0.3px #e2e2e2;left:-153.60px;width:700px;text-align:right;">1,63</div>
<div class="t" style="top:167.50px;font-size:12.5px;line-height:16px;color:#33985a;-webkit-text-stroke:0.15px #33985a;left:-81.70px;width:700px;text-align:right;">481,19</div>
<div class="t" style="top:161.20px;font-size:12.5px;line-height:16px;color:#33985a;-webkit-text-stroke:0.1px #33985a;left:-10.20px;width:700px;text-align:right;">0,0055</div>
<div class="t" style="top:174.50px;font-size:12.5px;line-height:16px;color:#e2e2e2;-webkit-text-stroke:0.3px #e2e2e2;left:-10.20px;width:700px;text-align:right;">0,00 %</div>
<div class="t" style="top:161.20px;font-size:12.5px;line-height:16px;color:#e2e2e2;-webkit-text-stroke:0.3px #e2e2e2;left:63.90px;width:700px;text-align:right;">0,0744</div>
<div class="t" style="top:174.50px;font-size:12.5px;line-height:16px;color:#e2e2e2;-webkit-text-stroke:0.3px #e2e2e2;left:63.90px;width:700px;text-align:right;">65,54 %</div>
<div class="b" style="left:823.9px;top:169.15px;width:10.5px;height:1.1px;background:linear-gradient(90deg,#7c2a3c 0 43%,transparent 43% 57%,#7c2a3c 57% 100%);"></div>
<div class="b" style="left:823.9px;top:182.45px;width:10.5px;height:1.1px;background:linear-gradient(90deg,#a8a8a8 0 43%,transparent 43% 57%,#a8a8a8 57% 100%);"></div>
<div class="b" style="left:896.1px;top:175.45px;width:10.5px;height:1.1px;background:linear-gradient(90deg,#7c2a3c 0 43%,transparent 43% 57%,#7c2a3c 57% 100%);"></div>
<div class="t" style="top:167.50px;font-size:12.5px;line-height:16px;color:#e2e2e2;-webkit-text-stroke:0.3px #e2e2e2;left:253.50px;width:700px;text-align:right;">0,00</div>
<div class="t" style="top:167.50px;font-size:12.5px;line-height:16px;color:#e2e2e2;-webkit-text-stroke:0.3px #e2e2e2;left:299.30px;width:700px;text-align:right;">0,93</div>
<div class="b" style="left:1055.0px;top:175.45px;width:10.5px;height:1.1px;background:linear-gradient(90deg,#a8a8a8 0 43%,transparent 43% 57%,#a8a8a8 57% 100%);"></div>
<div class="t" style="top:167.50px;font-size:12.5px;line-height:16px;color:#f0f0f0;font-weight:700;left:769.30px;width:700px;text-align:center;">81 000</div>
<div class="b" style="left:1212.7px;top:175.45px;width:10.5px;height:1.1px;background:linear-gradient(90deg,#a8a8a8 0 43%,transparent 43% 57%,#a8a8a8 57% 100%);"></div>
<div class="t" style="top:167.50px;font-size:12.5px;line-height:16px;color:#e2e2e2;-webkit-text-stroke:0.3px #e2e2e2;left:733.80px;width:700px;text-align:right;">0,00</div>
<div class="b" style="left:1502.7px;top:175.45px;width:10.5px;height:1.1px;background:linear-gradient(90deg,#1f5a35 0 43%,transparent 43% 57%,#1f5a35 57% 100%);"></div>
<div class="b" style="left:1573.6px;top:168.65px;width:10.5px;height:1.1px;background:linear-gradient(90deg,#1f5a35 0 43%,transparent 43% 57%,#1f5a35 57% 100%);"></div>
<div class="b" style="left:1573.6px;top:182.75px;width:10.5px;height:1.1px;background:linear-gradient(90deg,#a8a8a8 0 43%,transparent 43% 57%,#a8a8a8 57% 100%);"></div>
<div class="t" style="top:160.90px;font-size:12.5px;line-height:16px;color:#e2e2e2;-webkit-text-stroke:0.3px #e2e2e2;left:958.50px;width:700px;text-align:right;">0,0000</div>
<div class="t" style="top:175.10px;font-size:12.5px;line-height:16px;color:#e2e2e2;-webkit-text-stroke:0.3px #e2e2e2;left:958.50px;width:700px;text-align:right;">65,54 %</div>
<div class="b" style="left:0;top:195px;width:1074px;height:39px;background:#03120b;border-top:1px solid #1b251e;box-sizing:border-box;"></div>
<div class="b" style="left:1074px;top:195px;width:91px;height:39px;background:#262626;border-top:1px solid #2c2c2c;box-sizing:border-box;"></div>
<div class="b" style="left:1074px;top:195px;width:3px;height:39px;background:#1e2521"></div>
<div class="b" style="left:1165px;top:195px;width:497px;height:39px;background:#000;border-top:1px solid #1e1e1e;box-sizing:border-box;"></div>
<div class="b" style="left:93.0px;top:214.45px;width:10.5px;height:1.1px;background:linear-gradient(90deg,#a8a8a8 0 43%,transparent 43% 57%,#a8a8a8 57% 100%);"></div>
<div class="t" style="top:206.50px;font-size:12.5px;line-height:16px;color:#e2e2e2;-webkit-text-stroke:0.3px #e2e2e2;left:-506.20px;width:700px;text-align:right;">0,00</div>
<div class="t" style="top:206.50px;font-size:12.5px;line-height:16px;color:#e2e2e2;-webkit-text-stroke:0.3px #e2e2e2;left:-364.30px;width:700px;text-align:right;">0</div>
<div class="t" style="top:206.50px;font-size:12.5px;line-height:16px;color:#e2e2e2;-webkit-text-stroke:0.3px #e2e2e2;left:-153.60px;width:700px;text-align:right;">0,22</div>
<div class="t" style="top:206.50px;font-size:12.5px;line-height:16px;color:#33985a;-webkit-text-stroke:0.15px #33985a;left:-81.70px;width:700px;text-align:right;">3 630,79</div>
<div class="t" style="top:200.20px;font-size:12.5px;line-height:16px;color:#33985a;-webkit-text-stroke:0.1px #33985a;left:-10.20px;width:700px;text-align:right;">0,0415</div>
<div class="t" style="top:213.50px;font-size:12.5px;line-height:16px;color:#e2e2e2;-webkit-text-stroke:0.3px #e2e2e2;left:-10.20px;width:700px;text-align:right;">0,00 %</div>
<div class="t" style="top:200.20px;font-size:12.5px;line-height:16px;color:#e2e2e2;-webkit-text-stroke:0.3px #e2e2e2;left:63.90px;width:700px;text-align:right;">0,0630</div>
<div class="t" style="top:213.50px;font-size:12.5px;line-height:16px;color:#e2e2e2;-webkit-text-stroke:0.3px #e2e2e2;left:63.90px;width:700px;text-align:right;">65,46 %</div>
<div class="b" style="left:823.9px;top:208.15px;width:10.5px;height:1.1px;background:linear-gradient(90deg,#7c2a3c 0 43%,transparent 43% 57%,#7c2a3c 57% 100%);"></div>
<div class="b" style="left:823.9px;top:221.45px;width:10.5px;height:1.1px;background:linear-gradient(90deg,#a8a8a8 0 43%,transparent 43% 57%,#a8a8a8 57% 100%);"></div>
<div class="b" style="left:896.1px;top:214.45px;width:10.5px;height:1.1px;background:linear-gradient(90deg,#7c2a3c 0 43%,transparent 43% 57%,#7c2a3c 57% 100%);"></div>
<div class="t" style="top:206.50px;font-size:12.5px;line-height:16px;color:#e2e2e2;-webkit-text-stroke:0.3px #e2e2e2;left:253.50px;width:700px;text-align:right;">0,00</div>
<div class="t" style="top:206.50px;font-size:12.5px;line-height:16px;color:#e2e2e2;-webkit-text-stroke:0.3px #e2e2e2;left:299.30px;width:700px;text-align:right;">0,94</div>
<div class="b" style="left:1055.0px;top:214.45px;width:10.5px;height:1.1px;background:linear-gradient(90deg,#a8a8a8 0 43%,transparent 43% 57%,#a8a8a8 57% 100%);"></div>
<div class="t" style="top:206.50px;font-size:12.5px;line-height:16px;color:#f0f0f0;font-weight:700;left:769.30px;width:700px;text-align:center;">82 000</div>
<div class="b" style="left:1212.7px;top:214.45px;width:10.5px;height:1.1px;background:linear-gradient(90deg,#a8a8a8 0 43%,transparent 43% 57%,#a8a8a8 57% 100%);"></div>
<div class="t" style="top:206.50px;font-size:12.5px;line-height:16px;color:#e2e2e2;-webkit-text-stroke:0.3px #e2e2e2;left:733.80px;width:700px;text-align:right;">0,00</div>
<div class="b" style="left:1502.7px;top:214.45px;width:10.5px;height:1.1px;background:linear-gradient(90deg,#1f5a35 0 43%,transparent 43% 57%,#1f5a35 57% 100%);"></div>
<div class="b" style="left:1573.6px;top:207.65px;width:10.5px;height:1.1px;background:linear-gradient(90deg,#1f5a35 0 43%,transparent 43% 57%,#1f5a35 57% 100%);"></div>
<div class="b" style="left:1573.6px;top:221.75px;width:10.5px;height:1.1px;background:linear-gradient(90deg,#a8a8a8 0 43%,transparent 43% 57%,#a8a8a8 57% 100%);"></div>
<div class="t" style="top:199.90px;font-size:12.5px;line-height:16px;color:#e2e2e2;-webkit-text-stroke:0.3px #e2e2e2;left:958.50px;width:700px;text-align:right;">0,0000</div>
<div class="t" style="top:214.10px;font-size:12.5px;line-height:16px;color:#e2e2e2;-webkit-text-stroke:0.3px #e2e2e2;left:958.50px;width:700px;text-align:right;">65,46 %</div>
<div class="b" style="left:0;top:234px;width:1074px;height:39px;background:#03120b;border-top:1px solid #1b251e;box-sizing:border-box;"></div>
<div class="b" style="left:1074px;top:234px;width:91px;height:39px;background:#262626;border-top:1px solid #2c2c2c;box-sizing:border-box;"></div>
<div class="b" style="left:1074px;top:234px;width:3px;height:39px;background:#1e2521"></div>
<div class="b" style="left:1165px;top:234px;width:497px;height:39px;background:#000;border-top:1px solid #1e1e1e;box-sizing:border-box;"></div>
<div class="b" style="left:93.0px;top:253.45px;width:10.5px;height:1.1px;background:linear-gradient(90deg,#a8a8a8 0 43%,transparent 43% 57%,#a8a8a8 57% 100%);"></div>
<div class="t" style="top:245.50px;font-size:12.5px;line-height:16px;color:#e2e2e2;-webkit-text-stroke:0.3px #e2e2e2;left:-506.20px;width:700px;text-align:right;">0,00</div>
<div class="t" style="top:245.50px;font-size:12.5px;line-height:16px;color:#e2e2e2;-webkit-text-stroke:0.3px #e2e2e2;left:-364.30px;width:700px;text-align:right;">0</div>
<div class="t" style="top:245.50px;font-size:12.5px;line-height:16px;color:#e2e2e2;-webkit-text-stroke:0.3px #e2e2e2;left:-153.60px;width:700px;text-align:right;">0,85</div>
<div class="t" style="top:245.50px;font-size:12.5px;line-height:16px;color:#33985a;-webkit-text-stroke:0.15px #33985a;left:-81.70px;width:700px;text-align:right;">918,64</div>
<div class="t" style="top:239.20px;font-size:12.5px;line-height:16px;color:#33985a;-webkit-text-stroke:0.1px #33985a;left:-10.20px;width:700px;text-align:right;">0,0105</div>
<div class="t" style="top:252.50px;font-size:12.5px;line-height:16px;color:#e2e2e2;-webkit-text-stroke:0.3px #e2e2e2;left:-10.20px;width:700px;text-align:right;">0,00 %</div>
<div class="t" style="top:239.20px;font-size:12.5px;line-height:16px;color:#e2e2e2;-webkit-text-stroke:0.3px #e2e2e2;left:63.90px;width:700px;text-align:right;">0,0516</div>
<div class="t" style="top:252.50px;font-size:12.5px;line-height:16px;color:#e2e2e2;-webkit-text-stroke:0.3px #e2e2e2;left:63.90px;width:700px;text-align:right;">65,17 %</div>
<div class="b" style="left:823.9px;top:247.15px;width:10.5px;height:1.1px;background:linear-gradient(90deg,#7c2a3c 0 43%,transparent 43% 57%,#7c2a3c 57% 100%);"></div>
<div class="b" style="left:823.9px;top:260.45px;width:10.5px;height:1.1px;background:linear-gradient(90deg,#a8a8a8 0 43%,transparent 43% 57%,#a8a8a8 57% 100%);"></div>
<div class="b" style="left:896.1px;top:253.45px;width:10.5px;height:1.1px;background:linear-gradient(90deg,#7c2a3c 0 43%,transparent 43% 57%,#7c2a3c 57% 100%);"></div>
<div class="t" style="top:245.50px;font-size:12.5px;line-height:16px;color:#e2e2e2;-webkit-text-stroke:0.3px #e2e2e2;left:253.50px;width:700px;text-align:right;">0,00</div>
<div class="t" style="top:245.50px;font-size:12.5px;line-height:16px;color:#e2e2e2;-webkit-text-stroke:0.3px #e2e2e2;left:299.30px;width:700px;text-align:right;">0,95</div>
<div class="b" style="left:1055.0px;top:253.45px;width:10.5px;height:1.1px;background:linear-gradient(90deg,#a8a8a8 0 43%,transparent 43% 57%,#a8a8a8 57% 100%);"></div>
<div class="t" style="top:245.50px;font-size:12.5px;line-height:16px;color:#f0f0f0;font-weight:700;left:769.30px;width:700px;text-align:center;">83 000</div>
<div class="b" style="left:1212.7px;top:253.45px;width:10.5px;height:1.1px;background:linear-gradient(90deg,#a8a8a8 0 43%,transparent 43% 57%,#a8a8a8 57% 100%);"></div>
<div class="t" style="top:245.50px;font-size:12.5px;line-height:16px;color:#e2e2e2;-webkit-text-stroke:0.3px #e2e2e2;left:733.80px;width:700px;text-align:right;">0,00</div>
<div class="b" style="left:1502.7px;top:253.45px;width:10.5px;height:1.1px;background:linear-gradient(90deg,#1f5a35 0 43%,transparent 43% 57%,#1f5a35 57% 100%);"></div>
<div class="b" style="left:1573.6px;top:246.65px;width:10.5px;height:1.1px;background:linear-gradient(90deg,#1f5a35 0 43%,transparent 43% 57%,#1f5a35 57% 100%);"></div>
<div class="b" style="left:1573.6px;top:260.75px;width:10.5px;height:1.1px;background:linear-gradient(90deg,#a8a8a8 0 43%,transparent 43% 57%,#a8a8a8 57% 100%);"></div>
<div class="t" style="top:238.90px;font-size:12.5px;line-height:16px;color:#e2e2e2;-webkit-text-stroke:0.3px #e2e2e2;left:958.50px;width:700px;text-align:right;">0,0000</div>
<div class="t" style="top:253.10px;font-size:12.5px;line-height:16px;color:#e2e2e2;-webkit-text-stroke:0.3px #e2e2e2;left:958.50px;width:700px;text-align:right;">65,17 %</div>
<div class="b" style="left:0;top:273px;width:1074px;height:39px;background:#03120b;border-top:1px solid #1b251e;box-sizing:border-box;"></div>
<div class="b" style="left:1074px;top:273px;width:91px;height:39px;background:#262626;border-top:1px solid #2c2c2c;box-sizing:border-box;"></div>
<div class="b" style="left:1074px;top:273px;width:3px;height:39px;background:#1e2521"></div>
<div class="b" style="left:1165px;top:273px;width:497px;height:39px;background:#000;border-top:1px solid #1e1e1e;box-sizing:border-box;"></div>
<div class="t" style="top:284.50px;font-size:12.5px;line-height:16px;color:#e2e2e2;-webkit-text-stroke:0.3px #e2e2e2;left:-596.50px;width:700px;text-align:right;">0,0425</div>
<div class="t" style="top:284.50px;font-size:12.5px;line-height:16px;color:#e2e2e2;-webkit-text-stroke:0.3px #e2e2e2;left:-506.20px;width:700px;text-align:right;">0,00</div>
<div class="t" style="top:284.50px;font-size:12.5px;line-height:16px;color:#e2e2e2;-webkit-text-stroke:0.3px #e2e2e2;left:-364.30px;width:700px;text-align:right;">0,1</div>
<div class="t" style="top:284.50px;font-size:12.5px;line-height:16px;color:#e2e2e2;-webkit-text-stroke:0.3px #e2e2e2;left:-153.60px;width:700px;text-align:right;">0,01</div>
<div class="t" style="top:284.50px;font-size:12.5px;line-height:16px;color:#33985a;-webkit-text-stroke:0.15px #33985a;left:-81.70px;width:700px;text-align:right;">2 624,67</div>
<div class="t" style="top:278.20px;font-size:12.5px;line-height:16px;color:#33985a;-webkit-text-stroke:0.1px #33985a;left:-10.20px;width:700px;text-align:right;">0,0300</div>
<div class="t" style="top:291.50px;font-size:12.5px;line-height:16px;color:#e2e2e2;-webkit-text-stroke:0.3px #e2e2e2;left:-10.20px;width:700px;text-align:right;">0,00 %</div>
<div class="t" style="top:278.20px;font-size:12.5px;line-height:16px;color:#e2e2e2;-webkit-text-stroke:0.3px #e2e2e2;left:63.90px;width:700px;text-align:right;">0,0458</div>
<div class="t" style="top:291.50px;font-size:12.5px;line-height:16px;color:#e2e2e2;-webkit-text-stroke:0.3px #e2e2e2;left:63.90px;width:700px;text-align:right;">64,78 %</div>
<div class="b" style="left:823.9px;top:286.15px;width:10.5px;height:1.1px;background:linear-gradient(90deg,#7c2a3c 0 43%,transparent 43% 57%,#7c2a3c 57% 100%);"></div>
<div class="b" style="left:823.9px;top:299.45px;width:10.5px;height:1.1px;background:linear-gradient(90deg,#a8a8a8 0 43%,transparent 43% 57%,#a8a8a8 57% 100%);"></div>
<div class="b" style="left:896.1px;top:292.45px;width:10.5px;height:1.1px;background:linear-gradient(90deg,#7c2a3c 0 43%,transparent 43% 57%,#7c2a3c 57% 100%);"></div>
<div class="t" style="top:284.50px;font-size:12.5px;line-height:16px;color:#e2e2e2;-webkit-text-stroke:0.3px #e2e2e2;left:253.50px;width:700px;text-align:right;">0,00</div>
<div class="t" style="top:284.50px;font-size:12.5px;line-height:16px;color:#e2e2e2;-webkit-text-stroke:0.3px #e2e2e2;left:299.30px;width:700px;text-align:right;">0,95</div>
<div class="b" style="left:1055.0px;top:292.45px;width:10.5px;height:1.1px;background:linear-gradient(90deg,#a8a8a8 0 43%,transparent 43% 57%,#a8a8a8 57% 100%);"></div>
<div class="t" style="top:284.50px;font-size:12.5px;line-height:16px;color:#f0f0f0;font-weight:700;left:769.30px;width:700px;text-align:center;">83 500</div>
<div class="b" style="left:1212.7px;top:292.45px;width:10.5px;height:1.1px;background:linear-gradient(90deg,#a8a8a8 0 43%,transparent 43% 57%,#a8a8a8 57% 100%);"></div>
<div class="t" style="top:284.50px;font-size:12.5px;line-height:16px;color:#e2e2e2;-webkit-text-stroke:0.3px #e2e2e2;left:733.80px;width:700px;text-align:right;">0,00</div>
<div class="b" style="left:1502.7px;top:292.45px;width:10.5px;height:1.1px;background:linear-gradient(90deg,#1f5a35 0 43%,transparent 43% 57%,#1f5a35 57% 100%);"></div>
<div class="b" style="left:1573.6px;top:285.65px;width:10.5px;height:1.1px;background:linear-gradient(90deg,#1f5a35 0 43%,transparent 43% 57%,#1f5a35 57% 100%);"></div>
<div class="b" style="left:1573.6px;top:299.75px;width:10.5px;height:1.1px;background:linear-gradient(90deg,#a8a8a8 0 43%,transparent 43% 57%,#a8a8a8 57% 100%);"></div>
<div class="t" style="top:277.90px;font-size:12.5px;line-height:16px;color:#e2e2e2;-webkit-text-stroke:0.3px #e2e2e2;left:958.50px;width:700px;text-align:right;">0,0000</div>
<div class="t" style="top:292.10px;font-size:12.5px;line-height:16px;color:#e2e2e2;-webkit-text-stroke:0.3px #e2e2e2;left:958.50px;width:700px;text-align:right;">64,78 %</div>
<div class="b" style="left:0;top:312px;width:1074px;height:39px;background:#03120b;border-top:1px solid #1b251e;box-sizing:border-box;"></div>
<div class="b" style="left:1074px;top:312px;width:91px;height:39px;background:#262626;border-top:1px solid #2c2c2c;box-sizing:border-box;"></div>
<div class="b" style="left:1074px;top:312px;width:3px;height:39px;background:#1e2521"></div>
<div class="b" style="left:1165px;top:312px;width:497px;height:39px;background:#000;border-top:1px solid #1e1e1e;box-sizing:border-box;"></div>
<div class="b" style="left:93.0px;top:331.45px;width:10.5px;height:1.1px;background:linear-gradient(90deg,#a8a8a8 0 43%,transparent 43% 57%,#a8a8a8 57% 100%);"></div>
<div class="t" style="top:323.50px;font-size:12.5px;line-height:16px;color:#e2e2e2;-webkit-text-stroke:0.3px #e2e2e2;left:-506.20px;width:700px;text-align:right;">0,00</div>
<div class="t" style="top:323.50px;font-size:12.5px;line-height:16px;color:#e2e2e2;-webkit-text-stroke:0.3px #e2e2e2;left:-364.30px;width:700px;text-align:right;">0</div>
<div class="t" style="top:323.50px;font-size:12.5px;line-height:16px;color:#e2e2e2;-webkit-text-stroke:0.3px #e2e2e2;left:-153.60px;width:700px;text-align:right;">0,01</div>
<div class="t" style="top:323.50px;font-size:12.5px;line-height:16px;color:#33985a;-webkit-text-stroke:0.15px #33985a;left:-81.70px;width:700px;text-align:right;">2 318,46</div>
<div class="t" style="top:317.20px;font-size:12.5px;line-height:16px;color:#33985a;-webkit-text-stroke:0.1px #33985a;left:-10.20px;width:700px;text-align:right;">0,0265</div>
<div class="t" style="top:330.50px;font-size:12.5px;line-height:16px;color:#e2e2e2;-webkit-text-stroke:0.3px #e2e2e2;left:-10.20px;width:700px;text-align:right;">0,00 %</div>
<div class="t" style="top:317.20px;font-size:12.5px;line-height:16px;color:#e2e2e2;-webkit-text-stroke:0.3px #e2e2e2;left:63.90px;width:700px;text-align:right;">0,0401</div>
<div class="t" style="top:330.50px;font-size:12.5px;line-height:16px;color:#e2e2e2;-webkit-text-stroke:0.3px #e2e2e2;left:63.90px;width:700px;text-align:right;">64,02 %</div>
<div class="b" style="left:823.9px;top:325.15px;width:10.5px;height:1.1px;background:linear-gradient(90deg,#7c2a3c 0 43%,transparent 43% 57%,#7c2a3c 57% 100%);"></div>
<div class="b" style="left:823.9px;top:338.45px;width:10.5px;height:1.1px;background:linear-gradient(90deg,#a8a8a8 0 43%,transparent 43% 57%,#a8a8a8 57% 100%);"></div>
<div class="b" style="left:896.1px;top:331.45px;width:10.5px;height:1.1px;background:linear-gradient(90deg,#7c2a3c 0 43%,transparent 43% 57%,#7c2a3c 57% 100%);"></div>
<div class="t" style="top:323.50px;font-size:12.5px;line-height:16px;color:#e2e2e2;-webkit-text-stroke:0.3px #e2e2e2;left:253.50px;width:700px;text-align:right;">0,00</div>
<div class="t" style="top:323.50px;font-size:12.5px;line-height:16px;color:#e2e2e2;-webkit-text-stroke:0.3px #e2e2e2;left:299.30px;width:700px;text-align:right;">0,96</div>
<div class="b" style="left:1055.0px;top:331.45px;width:10.5px;height:1.1px;background:linear-gradient(90deg,#a8a8a8 0 43%,transparent 43% 57%,#a8a8a8 57% 100%);"></div>
<div class="t" style="top:323.50px;font-size:12.5px;line-height:16px;color:#f0f0f0;font-weight:700;left:769.30px;width:700px;text-align:center;">84 000</div>
<div class="b" style="left:1212.7px;top:331.45px;width:10.5px;height:1.1px;background:linear-gradient(90deg,#a8a8a8 0 43%,transparent 43% 57%,#a8a8a8 57% 100%);"></div>
<div class="t" style="top:323.50px;font-size:12.5px;line-height:16px;color:#e2e2e2;-webkit-text-stroke:0.3px #e2e2e2;left:733.80px;width:700px;text-align:right;">0,00</div>
<div class="b" style="left:1502.7px;top:331.45px;width:10.5px;height:1.1px;background:linear-gradient(90deg,#1f5a35 0 43%,transparent 43% 57%,#1f5a35 57% 100%);"></div>
<div class="b" style="left:1573.6px;top:324.65px;width:10.5px;height:1.1px;background:linear-gradient(90deg,#1f5a35 0 43%,transparent 43% 57%,#1f5a35 57% 100%);"></div>
<div class="b" style="left:1573.6px;top:338.75px;width:10.5px;height:1.1px;background:linear-gradient(90deg,#a8a8a8 0 43%,transparent 43% 57%,#a8a8a8 57% 100%);"></div>
<div class="t" style="top:316.90px;font-size:12.5px;line-height:16px;color:#e2e2e2;-webkit-text-stroke:0.3px #e2e2e2;left:958.50px;width:700px;text-align:right;">0,0000</div>
<div class="t" style="top:331.10px;font-size:12.5px;line-height:16px;color:#e2e2e2;-webkit-text-stroke:0.3px #e2e2e2;left:958.50px;width:700px;text-align:right;">64,02 %</div>
<div class="b" style="left:0;top:351px;width:1074px;height:39px;background:#03120b;border-top:1px solid #1b251e;box-sizing:border-box;"></div>
<div class="b" style="left:1074px;top:351px;width:91px;height:39px;background:#262626;border-top:1px solid #2c2c2c;box-sizing:border-box;"></div>
<div class="b" style="left:1074px;top:351px;width:3px;height:39px;background:#1e2521"></div>
<div class="b" style="left:1165px;top:351px;width:497px;height:39px;background:#000;border-top:1px solid #1e1e1e;box-sizing:border-box;"></div>
<div class="t" style="top:362.50px;font-size:12.5px;line-height:16px;color:#e2e2e2;-webkit-text-stroke:0.3px #e2e2e2;left:-596.50px;width:700px;text-align:right;">0,0240</div>
<div class="t" style="top:362.50px;font-size:12.5px;line-height:16px;color:#e2e2e2;-webkit-text-stroke:0.3px #e2e2e2;left:-506.20px;width:700px;text-align:right;">2,20</div>
<div class="t" style="top:362.50px;font-size:12.5px;line-height:16px;color:#e2e2e2;-webkit-text-stroke:0.3px #e2e2e2;left:-364.30px;width:700px;text-align:right;">2,2</div>
<div class="t" style="top:362.50px;font-size:12.5px;line-height:16px;color:#e2e2e2;-webkit-text-stroke:0.3px #e2e2e2;left:-153.60px;width:700px;text-align:right;">0,01</div>
<div class="t" style="top:362.50px;font-size:12.5px;line-height:16px;color:#33985a;-webkit-text-stroke:0.15px #33985a;left:-81.70px;width:700px;text-align:right;">1 968,50</div>
<div class="t" style="top:356.20px;font-size:12.5px;line-height:16px;color:#33985a;-webkit-text-stroke:0.1px #33985a;left:-10.20px;width:700px;text-align:right;">0,0225</div>
<div class="t" style="top:369.50px;font-size:12.5px;line-height:16px;color:#e2e2e2;-webkit-text-stroke:0.3px #e2e2e2;left:-10.20px;width:700px;text-align:right;">0,00 %</div>
<div class="t" style="top:356.20px;font-size:12.5px;line-height:16px;color:#e2e2e2;-webkit-text-stroke:0.3px #e2e2e2;left:63.90px;width:700px;text-align:right;">0,0344</div>
<div class="t" style="top:369.50px;font-size:12.5px;line-height:16px;color:#e2e2e2;-webkit-text-stroke:0.3px #e2e2e2;left:63.90px;width:700px;text-align:right;">62,57 %</div>
<div class="b" style="left:823.9px;top:364.15px;width:10.5px;height:1.1px;background:linear-gradient(90deg,#7c2a3c 0 43%,transparent 43% 57%,#7c2a3c 57% 100%);"></div>
<div class="b" style="left:823.9px;top:377.45px;width:10.5px;height:1.1px;background:linear-gradient(90deg,#a8a8a8 0 43%,transparent 43% 57%,#a8a8a8 57% 100%);"></div>
<div class="b" style="left:896.1px;top:370.45px;width:10.5px;height:1.1px;background:linear-gradient(90deg,#7c2a3c 0 43%,transparent 43% 57%,#7c2a3c 57% 100%);"></div>
<div class="t" style="top:362.50px;font-size:12.5px;line-height:16px;color:#e2e2e2;-webkit-text-stroke:0.3px #e2e2e2;left:253.50px;width:700px;text-align:right;">0,00</div>
<div class="t" style="top:362.50px;font-size:12.5px;line-height:16px;color:#e2e2e2;-webkit-text-stroke:0.3px #e2e2e2;left:299.30px;width:700px;text-align:right;">0,97</div>
<div class="b" style="left:1055.0px;top:370.45px;width:10.5px;height:1.1px;background:linear-gradient(90deg,#a8a8a8 0 43%,transparent 43% 57%,#a8a8a8 57% 100%);"></div>
<div class="t" style="top:362.50px;font-size:12.5px;line-height:16px;color:#f0f0f0;font-weight:700;left:769.30px;width:700px;text-align:center;">84 500</div>
<div class="b" style="left:1212.7px;top:370.45px;width:10.5px;height:1.1px;background:linear-gradient(90deg,#a8a8a8 0 43%,transparent 43% 57%,#a8a8a8 57% 100%);"></div>
<div class="t" style="top:362.50px;font-size:12.5px;line-height:16px;color:#e2e2e2;-webkit-text-stroke:0.3px #e2e2e2;left:733.80px;width:700px;text-align:right;">0,00</div>
<div class="b" style="left:1502.7px;top:370.45px;width:10.5px;height:1.1px;background:linear-gradient(90deg,#1f5a35 0 43%,transparent 43% 57%,#1f5a35 57% 100%);"></div>
<div class="b" style="left:1573.6px;top:363.65px;width:10.5px;height:1.1px;background:linear-gradient(90deg,#1f5a35 0 43%,transparent 43% 57%,#1f5a35 57% 100%);"></div>
<div class="b" style="left:1573.6px;top:377.75px;width:10.5px;height:1.1px;background:linear-gradient(90deg,#a8a8a8 0 43%,transparent 43% 57%,#a8a8a8 57% 100%);"></div>
<div class="t" style="top:355.90px;font-size:12.5px;line-height:16px;color:#e2e2e2;-webkit-text-stroke:0.3px #e2e2e2;left:958.50px;width:700px;text-align:right;">0,0000</div>
<div class="t" style="top:370.10px;font-size:12.5px;line-height:16px;color:#e2e2e2;-webkit-text-stroke:0.3px #e2e2e2;left:958.50px;width:700px;text-align:right;">62,57 %</div>
<div class="b" style="left:0;top:390px;width:1074px;height:39px;background:#03120b;border-top:1px solid #1b251e;box-sizing:border-box;"></div>
<div class="b" style="left:1074px;top:390px;width:91px;height:39px;background:#262626;border-top:1px solid #2c2c2c;box-sizing:border-box;"></div>
<div class="b" style="left:1074px;top:390px;width:3px;height:39px;background:#1e2521"></div>
<div class="b" style="left:1165px;top:390px;width:497px;height:39px;background:#000;border-top:1px solid #1e1e1e;box-sizing:border-box;"></div>
<div class="t" style="top:401.50px;font-size:12.5px;line-height:16px;color:#e2e2e2;-webkit-text-stroke:0.3px #e2e2e2;left:-596.50px;width:700px;text-align:right;">0,0260</div>
<div class="t" style="top:401.50px;font-size:12.5px;line-height:16px;color:#e2e2e2;-webkit-text-stroke:0.3px #e2e2e2;left:-506.20px;width:700px;text-align:right;">0,34</div>
<div class="t" style="top:401.50px;font-size:12.5px;line-height:16px;color:#e2e2e2;-webkit-text-stroke:0.3px #e2e2e2;left:-364.30px;width:700px;text-align:right;">0,59</div>
<div class="t" style="top:401.50px;font-size:12.5px;line-height:16px;color:#e2e2e2;-webkit-text-stroke:0.3px #e2e2e2;left:-153.60px;width:700px;text-align:right;">0,85</div>
<div class="t" style="top:401.50px;font-size:12.5px;line-height:16px;color:#33985a;-webkit-text-stroke:0.15px #33985a;left:-81.70px;width:700px;text-align:right;">918,64</div>
<div class="t" style="top:395.20px;font-size:12.5px;line-height:16px;color:#33985a;-webkit-text-stroke:0.1px #33985a;left:-10.20px;width:700px;text-align:right;">0,0105</div>
<div class="t" style="top:408.50px;font-size:12.5px;line-height:16px;color:#e2e2e2;-webkit-text-stroke:0.3px #e2e2e2;left:-10.20px;width:700px;text-align:right;">0,00 %</div>
<div class="t" style="top:395.20px;font-size:12.5px;line-height:16px;color:#e2e2e2;-webkit-text-stroke:0.3px #e2e2e2;left:63.90px;width:700px;text-align:right;">0,0287</div>
<div class="t" style="top:408.50px;font-size:12.5px;line-height:16px;color:#e2e2e2;-webkit-text-stroke:0.3px #e2e2e2;left:63.90px;width:700px;text-align:right;">59,89 %</div>
<div class="b" style="left:823.9px;top:403.15px;width:10.5px;height:1.1px;background:linear-gradient(90deg,#7c2a3c 0 43%,transparent 43% 57%,#7c2a3c 57% 100%);"></div>
<div class="b" style="left:823.9px;top:416.45px;width:10.5px;height:1.1px;background:linear-gradient(90deg,#a8a8a8 0 43%,transparent 43% 57%,#a8a8a8 57% 100%);"></div>
<div class="b" style="left:896.1px;top:409.45px;width:10.5px;height:1.1px;background:linear-gradient(90deg,#7c2a3c 0 43%,transparent 43% 57%,#7c2a3c 57% 100%);"></div>
<div class="t" style="top:401.50px;font-size:12.5px;line-height:16px;color:#e2e2e2;-webkit-text-stroke:0.3px #e2e2e2;left:253.50px;width:700px;text-align:right;">0,00</div>
<div class="t" style="top:401.50px;font-size:12.5px;line-height:16px;color:#e2e2e2;-webkit-text-stroke:0.3px #e2e2e2;left:299.30px;width:700px;text-align:right;">0,97</div>
<div class="b" style="left:1055.0px;top:409.45px;width:10.5px;height:1.1px;background:linear-gradient(90deg,#a8a8a8 0 43%,transparent 43% 57%,#a8a8a8 57% 100%);"></div>
<div class="t" style="top:401.50px;font-size:12.5px;line-height:16px;color:#f0f0f0;font-weight:700;left:769.30px;width:700px;text-align:center;">85 000</div>
<div class="b" style="left:1212.7px;top:409.45px;width:10.5px;height:1.1px;background:linear-gradient(90deg,#a8a8a8 0 43%,transparent 43% 57%,#a8a8a8 57% 100%);"></div>
<div class="t" style="top:401.50px;font-size:12.5px;line-height:16px;color:#e2e2e2;-webkit-text-stroke:0.3px #e2e2e2;left:733.80px;width:700px;text-align:right;">0,00</div>
<div class="b" style="left:1502.7px;top:409.45px;width:10.5px;height:1.1px;background:linear-gradient(90deg,#1f5a35 0 43%,transparent 43% 57%,#1f5a35 57% 100%);"></div>
<div class="b" style="left:1573.6px;top:402.65px;width:10.5px;height:1.1px;background:linear-gradient(90deg,#1f5a35 0 43%,transparent 43% 57%,#1f5a35 57% 100%);"></div>
<div class="b" style="left:1573.6px;top:416.75px;width:10.5px;height:1.1px;background:linear-gradient(90deg,#a8a8a8 0 43%,transparent 43% 57%,#a8a8a8 57% 100%);"></div>
<div class="t" style="top:394.90px;font-size:12.5px;line-height:16px;color:#e2e2e2;-webkit-text-stroke:0.3px #e2e2e2;left:958.50px;width:700px;text-align:right;">0,0000</div>
<div class="t" style="top:409.10px;font-size:12.5px;line-height:16px;color:#e2e2e2;-webkit-text-stroke:0.3px #e2e2e2;left:958.50px;width:700px;text-align:right;">59,89 %</div>
</div>
<div class="t" style="top:624.00px;font-size:14px;line-height:16px;color:#f0f0f0;-webkit-text-stroke:0.25px #f0f0f0;left:16.50px;">Недавние торговые операции</div>
<div class="b" style="left:0px;top:654px;width:1662px;height:1px;background:#242424;"></div>
<div class="t" style="top:664.60px;font-size:12.2px;line-height:16px;color:#f0f0f0;-webkit-text-stroke:0.3px #f0f0f0;left:16.50px;">Колл-опционы</div>
<div class="t" style="top:686.90px;font-size:12.2px;line-height:16px;color:#9c9c9c;-webkit-text-stroke:0.1px #9c9c9c;left:16.40px;">Контракт</div>
<div class="t" style="top:686.90px;font-size:11.7px;line-height:16px;color:#9c9c9c;-webkit-text-stroke:0.1px #9c9c9c;left:-314.50px;width:700px;text-align:right;">Цена</div>
<div class="t" style="top:686.90px;font-size:11.5px;line-height:16px;color:#9c9c9c;-webkit-text-stroke:0.1px #9c9c9c;left:-194.40px;width:700px;text-align:right;">OB</div>
<div class="t" style="top:686.90px;font-size:11.6px;line-height:16px;color:#9c9c9c;-webkit-text-stroke:0.1px #9c9c9c;left:-74.00px;width:700px;text-align:right;">Размер (BTC)</div>
<div class="t" style="top:686.90px;font-size:11.3px;line-height:16px;color:#9c9c9c;-webkit-text-stroke:0.1px #9c9c9c;left:45.30px;width:700px;text-align:right;">Рын.</div>
<div class="t" style="top:686.90px;font-size:11.8px;line-height:16px;color:#9c9c9c;-webkit-text-stroke:0.1px #9c9c9c;left:255.70px;width:700px;text-align:right;">Время</div>
<div class="t" style="top:664.60px;font-size:12.2px;line-height:16px;color:#f0f0f0;-webkit-text-stroke:0.3px #f0f0f0;left:976.50px;">Европейские пут-опционы</div>
<div class="t" style="top:686.90px;font-size:12.2px;line-height:16px;color:#9c9c9c;-webkit-text-stroke:0.1px #9c9c9c;left:976.40px;">Контракт</div>
<div class="t" style="top:686.90px;font-size:11.7px;line-height:16px;color:#9c9c9c;-webkit-text-stroke:0.1px #9c9c9c;left:645.50px;width:700px;text-align:right;">Цена</div>
<div class="t" style="top:686.90px;font-size:11.5px;line-height:16px;color:#9c9c9c;-webkit-text-stroke:0.1px #9c9c9c;left:765.60px;width:700px;text-align:right;">OB</div>
<div class="t" style="top:686.90px;font-size:11.6px;line-height:16px;color:#9c9c9c;-webkit-text-stroke:0.1px #9c9c9c;left:886.00px;width:700px;text-align:right;">Размер (BTC)</div>
<div class="t" style="top:686.90px;font-size:11.3px;line-height:16px;color:#9c9c9c;-webkit-text-stroke:0.1px #9c9c9c;left:1005.30px;width:700px;text-align:right;">Рын.</div>
<div class="t" style="top:686.90px;font-size:11.8px;line-height:16px;color:#9c9c9c;-webkit-text-stroke:0.1px #9c9c9c;left:1215.70px;width:700px;text-align:right;">Время</div>
<div class="t" style="top:664.60px;font-size:11.85px;line-height:16px;color:#9c9c9c;-webkit-text-stroke:0.1px #9c9c9c;left:251.60px;width:700px;text-align:right;">Объем (24 ч):2 200,29 BTC</div>
<div class="t" style="top:719.20px;font-size:12.5px;line-height:16px;color:#f0f0f0;-webkit-text-stroke:0.3px #f0f0f0;left:16.20px;">BTCUSD-20250327-87750-C</div>
<div class="t" style="top:719.20px;font-size:12.5px;line-height:16px;color:#33985a;-webkit-text-stroke:0.1px #33985a;left:-316.00px;width:700px;text-align:right;">B0,0004</div>
<div class="t" style="top:719.20px;font-size:12.5px;line-height:16px;color:#33985a;-webkit-text-stroke:0.1px #33985a;left:-196.80px;width:700px;text-align:right;">23,43 %</div>
<div class="t" style="top:719.20px;font-size:12.5px;line-height:16px;color:#f0f0f0;-webkit-text-stroke:0.3px #f0f0f0;left:-77.00px;width:700px;text-align:right;">0,01</div>
<div class="t" style="top:719.20px;font-size:12.5px;line-height:16px;color:#f0f0f0;-webkit-text-stroke:0.3px #f0f0f0;left:42.20px;width:700px;text-align:right;">0,00045</div>
<div class="t" style="top:719.20px;font-size:12.75px;line-height:16px;color:#f0f0f0;-webkit-text-stroke:0.3px #f0f0f0;left:251.60px;width:700px;text-align:right;">2025-03-27 09:38:43</div>
<div class="t" style="top:719.20px;font-size:12.5px;line-height:16px;color:#f0f0f0;-webkit-text-stroke:0.3px #f0f0f0;left:976.20px;">BTCUSD-20250327-87250-P</div>
<div class="t" style="top:719.20px;font-size:12.5px;line-height:16px;color:#33985a;-webkit-text-stroke:0.1px #33985a;left:643.80px;width:700px;text-align:right;">B0,0004</div>
<div class="t" style="top:719.20px;font-size:12.5px;line-height:16px;color:#33985a;-webkit-text-stroke:0.1px #33985a;left:763.00px;width:700px;text-align:right;">29,29 %</div>
<div class="t" style="top:719.20px;font-size:12.5px;line-height:16px;color:#f0f0f0;-webkit-text-stroke:0.3px #f0f0f0;left:883.30px;width:700px;text-align:right;">0,01</div>
<div class="t" style="top:719.20px;font-size:12.5px;line-height:16px;color:#f0f0f0;-webkit-text-stroke:0.3px #f0f0f0;left:1002.20px;width:700px;text-align:right;">0,00045</div>
<div class="t" style="top:767.20px;font-size:12.5px;line-height:16px;color:#f0f0f0;-webkit-text-stroke:0.3px #f0f0f0;left:16.20px;">BTCUSD-20250627-110000-C</div>
<div class="t" style="top:767.20px;font-size:12.5px;line-height:16px;color:#33985a;-webkit-text-stroke:0.1px #33985a;left:-316.00px;width:700px;text-align:right;">B0,0310</div>
<div class="t" style="top:767.20px;font-size:12.5px;line-height:16px;color:#33985a;-webkit-text-stroke:0.1px #33985a;left:-196.80px;width:700px;text-align:right;">50,67 %</div>
<div class="t" style="top:767.20px;font-size:12.5px;line-height:16px;color:#f0f0f0;-webkit-text-stroke:0.3px #f0f0f0;left:-77.00px;width:700px;text-align:right;">0,5</div>
<div class="t" style="top:767.20px;font-size:12.5px;line-height:16px;color:#f0f0f0;-webkit-text-stroke:0.3px #f0f0f0;left:42.20px;width:700px;text-align:right;">0,03084</div>
<div class="t" style="top:767.20px;font-size:12.75px;line-height:16px;color:#f0f0f0;-webkit-text-stroke:0.3px #f0f0f0;left:251.60px;width:700px;text-align:right;">2025-03-27 09:34:43</div>
<div class="t" style="top:767.20px;font-size:12.5px;line-height:16px;color:#f0f0f0;-webkit-text-stroke:0.3px #f0f0f0;left:976.20px;">BTCUSD-20250327-87250-P</div>
<div class="t" style="top:767.20px;font-size:12.5px;line-height:16px;color:#33985a;-webkit-text-stroke:0.1px #33985a;left:643.80px;width:700px;text-align:right;">B0,0004</div>
<div class="t" style="top:767.20px;font-size:12.5px;line-height:16px;color:#33985a;-webkit-text-stroke:0.1px #33985a;left:763.00px;width:700px;text-align:right;">29,29 %</div>
<div class="t" style="top:767.20px;font-size:12.5px;line-height:16px;color:#f0f0f0;-webkit-text-stroke:0.3px #f0f0f0;left:883.30px;width:700px;text-align:right;">0,01</div>
<div class="t" style="top:767.20px;font-size:12.5px;line-height:16px;color:#f0f0f0;-webkit-text-stroke:0.3px #f0f0f0;left:1002.20px;width:700px;text-align:right;">0,00045</div>
<div class="t" style="top:815.20px;font-size:12.5px;line-height:16px;color:#f0f0f0;-webkit-text-stroke:0.3px #f0f0f0;left:16.20px;">BTCUSD-20250327-88000-C</div>
<div class="t" style="top:815.20px;font-size:12.5px;line-height:16px;color:#b0324f;-webkit-text-stroke:0.1px #b0324f;left:-316.00px;width:700px;text-align:right;">B0,0001</div>
<div class="b" style="left:492.7px;top:823.15px;width:10.5px;height:1.1px;background:linear-gradient(90deg,#7c2a3c 0 43%,transparent 43% 57%,#7c2a3c 57% 100%);"></div>
<div class="t" style="top:815.20px;font-size:12.5px;line-height:16px;color:#f0f0f0;-webkit-text-stroke:0.3px #f0f0f0;left:-77.00px;width:700px;text-align:right;">0,05</div>
<div class="b" style="left:731.7px;top:823.15px;width:10.5px;height:1.1px;background:linear-gradient(90deg,#a8a8a8 0 43%,transparent 43% 57%,#a8a8a8 57% 100%);"></div>
<div class="t" style="top:815.20px;font-size:12.75px;line-height:16px;color:#f0f0f0;-webkit-text-stroke:0.3px #f0f0f0;left:251.60px;width:700px;text-align:right;">2025-03-27 09:33:49</div>
<div class="t" style="top:815.20px;font-size:12.5px;line-height:16px;color:#f0f0f0;-webkit-text-stroke:0.3px #f0f0f0;left:976.20px;">BTCUSD-20250327-87250-P</div>
<div class="t" style="top:815.20px;font-size:12.5px;line-height:16px;color:#33985a;-webkit-text-stroke:0.1px #33985a;left:643.80px;width:700px;text-align:right;">B0,0004</div>
<div class="t" style="top:815.20px;font-size:12.5px;line-height:16px;color:#33985a;-webkit-text-stroke:0.1px #33985a;left:763.00px;width:700px;text-align:right;">29,29 %</div>
<div class="t" style="top:815.20px;font-size:12.5px;line-height:16px;color:#f0f0f0;-webkit-text-stroke:0.3px #f0f0f0;left:883.30px;width:700px;text-align:right;">0,01</div>
<div class="t" style="top:815.20px;font-size:12.5px;line-height:16px;color:#f0f0f0;-webkit-text-stroke:0.3px #f0f0f0;left:1002.20px;width:700px;text-align:right;">0,00045</div>
<div class="t" style="top:863.20px;font-size:12.5px;line-height:16px;color:#f0f0f0;-webkit-text-stroke:0.3px #f0f0f0;left:16.20px;">BTCUSD-20250327-88000-C</div>
<div class="t" style="top:863.20px;font-size:12.5px;line-height:16px;color:#b0324f;-webkit-text-stroke:0.1px #b0324f;left:-316.00px;width:700px;text-align:right;">B0,0001</div>
<div class="b" style="left:492.7px;top:871.15px;width:10.5px;height:1.1px;background:linear-gradient(90deg,#7c2a3c 0 43%,transparent 43% 57%,#7c2a3c 57% 100%);"></div>
<div class="t" style="top:863.20px;font-size:12.5px;line-height:16px;color:#f0f0f0;-webkit-text-stroke:0.3px #f0f0f0;left:-77.00px;width:700px;text-align:right;">0,41</div>
<div class="b" style="left:731.7px;top:871.15px;width:10.5px;height:1.1px;background:linear-gradient(90deg,#a8a8a8 0 43%,transparent 43% 57%,#a8a8a8 57% 100%);"></div>
<div class="t" style="top:863.20px;font-size:12.75px;line-height:16px;color:#f0f0f0;-webkit-text-stroke:0.3px #f0f0f0;left:251.60px;width:700px;text-align:right;">2025-03-27 09:33:49</div>
<div class="t" style="top:863.20px;font-size:12.5px;line-height:16px;color:#f0f0f0;-webkit-text-stroke:0.3px #f0f0f0;left:976.20px;">BTCUSD-20250327-87250-P</div>
<div class="t" style="top:863.20px;font-size:12.5px;line-height:16px;color:#33985a;-webkit-text-stroke:0.1px #33985a;left:643.80px;width:700px;text-align:right;">B0,0004</div>
<div class="t" style="top:863.20px;font-size:12.5px;line-height:16px;color:#33985a;-webkit-text-stroke:0.1px #33985a;left:763.00px;width:700px;text-align:right;">29,29 %</div>
<div class="t" style="top:863.20px;font-size:12.5px;line-height:16px;color:#f0f0f0;-webkit-text-stroke:0.3px #f0f0f0;left:883.30px;width:700px;text-align:right;">0,01</div>
<div class="t" style="top:863.20px;font-size:12.5px;line-height:16px;color:#f0f0f0;-webkit-text-stroke:0.3px #f0f0f0;left:1002.20px;width:700px;text-align:right;">0,00045</div>
<div class="t" style="top:911.20px;font-size:12.5px;line-height:16px;color:#f0f0f0;-webkit-text-stroke:0.3px #f0f0f0;left:16.20px;">BTCUSD-20250327-88000-C</div>
<div class="t" style="top:911.20px;font-size:12.5px;line-height:16px;color:#b0324f;-webkit-text-stroke:0.1px #b0324f;left:-316.00px;width:700px;text-align:right;">B0,0001</div>
<div class="b" style="left:492.7px;top:919.15px;width:10.5px;height:1.1px;background:linear-gradient(90deg,#7c2a3c 0 43%,transparent 43% 57%,#7c2a3c 57% 100%);"></div>
<div class="t" style="top:911.20px;font-size:12.5px;line-height:16px;color:#f0f0f0;-webkit-text-stroke:0.3px #f0f0f0;left:-77.00px;width:700px;text-align:right;">0,55</div>
<div class="b" style="left:731.7px;top:919.15px;width:10.5px;height:1.1px;background:linear-gradient(90deg,#a8a8a8 0 43%,transparent 43% 57%,#a8a8a8 57% 100%);"></div>
<div class="t" style="top:911.20px;font-size:12.75px;line-height:16px;color:#f0f0f0;-webkit-text-stroke:0.3px #f0f0f0;left:251.60px;width:700px;text-align:right;">2025-03-27 09:33:49</div>
<div class="t" style="top:911.20px;font-size:12.5px;line-height:16px;color:#f0f0f0;-webkit-text-stroke:0.3px #f0f0f0;left:976.20px;">BTCUSD-20250327-87250-P</div>
<div class="t" style="top:911.20px;font-size:12.5px;line-height:16px;color:#33985a;-webkit-text-stroke:0.1px #33985a;left:643.80px;width:700px;text-align:right;">B0,0004</div>
<div class="t" style="top:911.20px;font-size:12.5px;line-height:16px;color:#33985a;-webkit-text-stroke:0.1px #33985a;left:763.00px;width:700px;text-align:right;">29,29 %</div>
<div class="t" style="top:911.20px;font-size:12.5px;line-height:16px;color:#f0f0f0;-webkit-text-stroke:0.3px #f0f0f0;left:883.30px;width:700px;text-align:right;">0,01</div>
<div class="t" style="top:911.20px;font-size:12.5px;line-height:16px;color:#f0f0f0;-webkit-text-stroke:0.3px #f0f0f0;left:1002.20px;width:700px;text-align:right;">0,00045</div>
<div class="b" style="left:956px;top:716.5px;width:4px;height:15.5px;background:#6e6e6e;border-radius:2px;"></div>
</body></html>
